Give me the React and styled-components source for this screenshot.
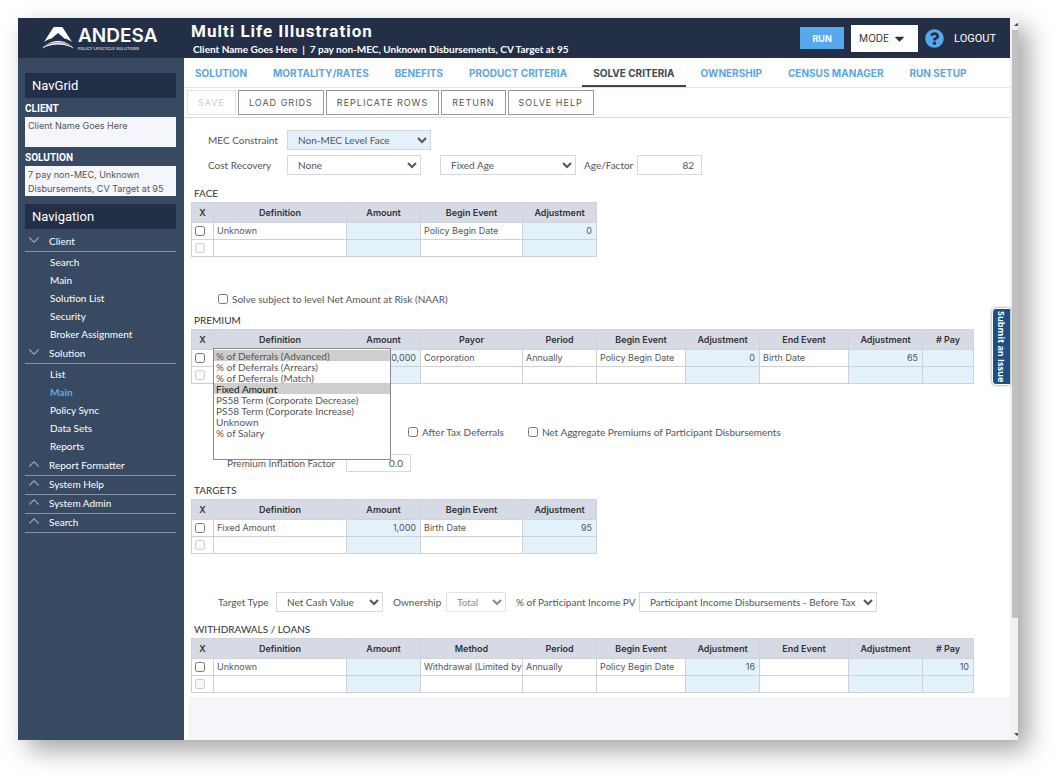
import { useState } from "react";
import styled, { createGlobalStyle } from "styled-components";
import { FaQuestionCircle, FaCaretDown } from "react-icons/fa";
import { ChevronDown, ChevronUp } from "lucide-react";

const GlobalStyle = createGlobalStyle`
  * {
    box-sizing: border-box;
  }
  body {
    margin: 0;
    background: #fff;
    font-family: Inter, "Liberation Sans", sans-serif;
    font-size: 9px;
    color: #555;
  }
  button, input, select, textarea {
    font: inherit;
    color: inherit;
    border-radius: 0;
    margin: 0;
  }
  a {
    color: inherit;
    text-decoration: none;
  }
`;

const Page = styled.div`
  min-height: 100vh;
  padding: 18px 42px 42px 18px;
  display: flex;
`;

const Frame = styled.div`
  flex: 1;
  min-width: 0;
  display: flex;
  position: relative;
  background: #fff;
  box-shadow: 10px 10px 24px rgba(0, 0, 0, 0.36);
`;

const Shell = styled.div`
  flex: 1;
  min-width: 0;
  display: flex;
  flex-direction: column;
`;

/* header */
const Header = styled.header`
  height: 40px;
  display: flex;
  align-items: center;
  background: #232f47;
  color: #fff;
`;

const Brand = styled.div`
  width: 173px;
  padding-left: 24px;
  display: flex;
  align-items: center;
  gap: 4px;
`;

const BrandText = styled.div`
  display: flex;
  flex-direction: column;
`;

const BrandName = styled.span`
  font-size: 19px;
  line-height: 20px;
  font-weight: 600;
`;

const BrandTag = styled.span`
  font-size: 4px;
  line-height: 5px;
  white-space: nowrap;
`;

const Heading = styled.div`
  flex: 1;
`;

const Title = styled.h1`
  margin: 0;
  font-family: Roboto, sans-serif;
  font-size: 17px;
  line-height: 22px;
  font-weight: 700;
  letter-spacing: 1px;
`;

const Subtitle = styled.p`
  margin: 0;
  padding-left: 2px;
  font-family: Lato, sans-serif;
  font-size: 10px;
  line-height: 14px;
  font-weight: 700;
  white-space: pre;
`;

const HeaderActions = styled.div`
  display: flex;
  align-items: center;
  gap: 7px;
  padding-right: 14px;
`;

const RunButton = styled.button`
  width: 44px;
  height: 22px;
  border: 0;
  background: #56aaec;
  color: #fff;
  font-weight: 700;
`;

const ModeButton = styled.button`
  width: 67px;
  height: 27px;
  padding: 0 11px 0 8px;
  display: flex;
  align-items: center;
  justify-content: space-between;
  border: 0;
  background: #fff;
  color: #333;
  font-size: 10px;
`;

const HelpButton = styled.button`
  display: flex;
  padding: 0;
  border: 0;
  border-radius: 50%;
  background: #232f47;
  color: #56aaec;
`;

const Logout = styled.a`
  padding-left: 3px;
  font-family: Roboto, sans-serif;
  font-size: 11px;
`;

/* sidebar */
const Body = styled.div`
  flex: 1;
  display: flex;
`;

const Sidebar = styled.aside`
  width: 166px;
  flex-shrink: 0;
  padding: 15px 8px 0 7px;
  display: flex;
  flex-direction: column;
  background: #384a61;
  color: #fff;
`;

const BarTitle = styled.h2`
  margin: 0;
  height: 25px;
  padding-left: 7px;
  background: #232f47;
  font-family: Roboto, sans-serif;
  font-size: 13px;
  line-height: 25px;
  font-weight: 400;
`;

const SideLabel = styled.label`
  padding: 4px 0 1px;
  font-family: Roboto, sans-serif;
  font-size: 10px;
  line-height: 14px;
  font-weight: 700;
`;

const SideText = styled.textarea`
  height: 30px;
  padding: 2px 3px;
  border: 0;
  resize: none;
  overflow: hidden;
  background: #f4f6fb;
  color: #555;
  line-height: 14px;
`;

const Nav = styled.nav`
  display: flex;
  flex-direction: column;
  padding-top: 4px;
  font-family: Lato, sans-serif;
  font-size: 10px;
`;

const NavBlock = styled.div`
  margin-top: 8px;
`;

const NavGroup = styled.button`
  height: 19px;
  padding: 0 0 2px;
  display: flex;
  align-items: center;
  gap: 6px;
  border: 0;
  border-bottom: 1px solid #8594a8;
  background: none;
  text-align: left;

  svg {
    margin-bottom: 2px;
    color: #8fa3bc;
  }
`;

const NavList = styled.ul`
  margin: 0;
  padding: 1px 0 2px 25px;
  list-style: none;
`;

const NavItem = styled.li`
  line-height: 18px;
  color: ${(props) => (props.$active ? "#56aaec" : "#fff")};
  font-weight: ${(props) => (props.$active ? 700 : 400)};
`;

/* main area */
const Main = styled.main`
  flex: 1;
  min-width: 0;
  display: flex;
  flex-direction: column;
`;

const Tabs = styled.nav`
  height: 30px;
  display: flex;
  gap: 4px;
  border-bottom: 1px solid #e1e3e8;
`;

const Tab = styled.a`
  padding: 0 11px;
  font-size: 10px;
  line-height: 31px;
  font-weight: 700;
  white-space: nowrap;
  color: ${(props) => (props.$active ? "#384a54" : "#5ba6dd")};
  box-shadow: ${(props) => (props.$active ? "inset 0 -2px #384a54" : "none")};
`;

const Toolbar = styled.div`
  height: 30px;
  padding: 2px 3px;
  display: flex;
  gap: 2px;
  border-bottom: 1px solid #d9d9d9;
`;

const ToolButton = styled.button`
  height: 25px;
  padding: 0 10px;
  border: 1px solid #999;
  background: #fff;
  color: #555;
  letter-spacing: 1px;
  white-space: nowrap;

  &:disabled {
    border-color: #e4e4e4;
    color: #ccc;
  }
`;

const Content = styled.div`
  padding: 12px 8px 4px 7px;
  background: #fff;
`;

const Filler = styled.div`
  flex: 1;
  margin-left: 4px;
  background: #f4f6fa;
`;

const FormRow = styled.div`
  height: 20px;
  margin: ${(props) => props.$margin || "0"};
  padding-left: ${(props) => props.$indent}px;
  display: flex;
  align-items: center;
  font-family: Lato, sans-serif;
  font-size: 10px;
  white-space: nowrap;
`;

const FieldLabel = styled.label`
  width: ${(props) => (props.$width ? `${props.$width}px` : "auto")};
  margin-right: 3px;
`;

const Select = styled.select`
  width: ${(props) => props.$width}px;
  height: 20px;
  margin-right: ${(props) => props.$gap || 0}px;
  padding: 0 0 0 6px;
  border: 1px solid #d5d8dc;
  background-color: ${(props) => (props.$blue ? "#e3f1fb" : "#fff")};

  &:disabled {
    opacity: 0.7;
  }
`;

const NumberInput = styled.input`
  width: 65px;
  height: ${(props) => props.$height || 20}px;
  padding: 0 7px;
  border: 1px solid #d5d8dc;
  text-align: right;
`;

const CheckLabel = styled.label`
  display: flex;
  align-items: center;
  gap: 4px;
  margin-right: 24px;
`;

const Checkbox = styled.input.attrs({ type: "checkbox" })`
  width: 10px;
  height: 10px;
`;

const SectionTitle = styled.h3`
  margin: 0;
  padding-left: 3px;
  font-family: Lato, sans-serif;
  font-size: 10px;
  line-height: 18px;
  font-weight: 400;
  color: #333;
`;

const Table = styled.table`
  width: ${(props) => props.$width}px;
  table-layout: fixed;
  border-collapse: collapse;
`;

const Th = styled.th`
  height: 20px;
  padding: 0;
  border: 1px solid #cfd3dc;
  background: #d6dae4;
  color: #333;
  font-weight: 600;
`;

const Td = styled.td`
  height: 17px;
  padding: ${(props) => (props.$right ? "0 4px 0 0" : "0 0 0 3px")};
  border: 1px solid #cdd1d6;
  background: ${(props) => (props.$blue ? "#e3f1fb" : "#fff")};
  text-align: ${(props) => (props.$right ? "right" : "left")};
  line-height: 14px;
  white-space: nowrap;
`;

const Clip = styled.div`
  overflow: hidden;
`;

const CheckCell = styled(Td)`
  line-height: 0;
`;

const PopupAnchor = styled.div`
  position: relative;
`;

const DefinitionList = styled.select`
  position: absolute;
  left: 22px;
  top: 19px;
  z-index: 1;
  width: 178px;
  height: 112px;
  padding: 1px 0;
  border: 1px solid #888;
  background: #fff;
  font-family: Lato, sans-serif;
  font-size: 10px;
  overflow: hidden;
  outline: 0;

  option {
    height: 11px;
    min-height: 11px;
    padding: 0 2px;
    line-height: 11px;
  }
  option:first-child {
    background: #cecece;
  }
`;

const IssueButton = styled.button`
  position: absolute;
  right: 8px;
  top: 290px;
  width: 18px;
  height: 77px;
  padding: 0;
  border: 1px solid #fff;
  border-right: 0;
  border-radius: 4px 0 0 4px;
  background: #1f4e80;
  box-shadow: 0 0 3px rgba(0, 0, 0, 0.5);
  color: #fff;
  font-family: "Open Sans", sans-serif;
  font-weight: 700;
  writing-mode: vertical-rl;
  white-space: nowrap;
`;

/* scrollbar */
const ScrollTrack = styled.div`
  width: 8px;
  padding-left: 2px;
  display: flex;
  flex-direction: column;
  background: #f1f1f1;
  color: #505050;
`;

const ScrollArrow = styled.div`
  height: 12px;
  display: flex;
  align-items: center;
  justify-content: flex-end;
`;

const ScrollThumb = styled.div`
  flex: 59;
  background: #c1c1c1;
`;

const ScrollRest = styled.div`
  flex: 11;
`;

const tabs = [
  "SOLUTION",
  "MORTALITY/RATES",
  "BENEFITS",
  "PRODUCT CRITERIA",
  "SOLVE CRITERIA",
  "OWNERSHIP",
  "CENSUS MANAGER",
  "RUN SETUP",
];

const navGroups = [
  {
    name: "Client",
    items: ["Search", "Main", "Solution List", "Security", "Broker Assignment"],
  },
  {
    name: "Solution",
    items: ["List", "Main", "Policy Sync", "Data Sets", "Reports"],
    active: "Main",
  },
  { name: "Report Formatter" },
  { name: "System Help" },
  { name: "System Admin" },
  { name: "Search" },
];

const definitions = [
  "% of Deferrals (Advanced)",
  "% of Deferrals (Arrears)",
  "% of Deferrals (Match)",
  "Fixed Amount",
  "PS58 Term (Corporate Decrease)",
  "PS58 Term (Corporate Increase)",
  "Unknown",
  "% of Salary",
];

const shortColumns = [
  { name: "Definition", width: 133 },
  { name: "Amount", width: 74, blue: true },
  { name: "Begin Event", width: 102 },
  { name: "Adjustment", width: 74, blue: true },
];

const longColumns = (third) => [
  { name: "Definition", width: 133 },
  { name: "Amount", width: 74, blue: true },
  { name: third, width: 102 },
  { name: "Period", width: 74 },
  { name: "Begin Event", width: 89 },
  { name: "Adjustment", width: 74, blue: true },
  { name: "End Event", width: 89 },
  { name: "Adjustment", width: 74, blue: true },
  { name: "# Pay", width: 51, blue: true },
];

const Grid = ({ columns, row, label }) => {
  const total = columns.reduce((sum, col) => sum + col.width, 23);

  return (
    <Table $width={total} aria-label={label}>
      <colgroup>
        <col style={{ width: 22 }} />
        {columns.map((col, i) => (
          <col key={i} style={{ width: col.width }} />
        ))}
      </colgroup>
      <thead>
        <tr>
          <Th>X</Th>
          {columns.map((col, i) => (
            <Th key={i}>{col.name}</Th>
          ))}
        </tr>
      </thead>
      <tbody>
        {[row, []].map((cells, r) => (
          <tr key={r}>
            <CheckCell>
              <Checkbox disabled={r === 1} aria-label={`Select row ${r + 1}`} />
            </CheckCell>
            {columns.map((col, i) => (
              <Td key={i} $blue={col.blue} $right={col.blue}>
                <Clip>{cells[i]}</Clip>
              </Td>
            ))}
          </tr>
        ))}
      </tbody>
    </Table>
  );
};

const Logo = () => (
  <svg width="32" height="22" viewBox="0 0 32 22" fill="#fff" aria-hidden="true">
    <path d="M13 0h6c1 0 1.600.400 2 1l9 14c-2.500-1.800-5-2.800-7.500-3.400L16 6l-6.500 5.600C7 12.200 4.500 13.200 2 15L11 1c.400-.600 1-1 2-1z" />
    <path d="M0 21.500c9-10 23-10 32 0-10-5.500-22-5.500-32 0z" />
    <path
      d="M3 19c7.500-4.500 18.500-4.500 26 0"
      fill="none"
      stroke="#232f47"
      strokeWidth="0.600"
    />
  </svg>
);

export default function App() {
  const [definition, setDefinition] = useState("Fixed Amount");

  return (
    <Page>
      <GlobalStyle />
      <Frame>
        <Shell>
          <Header>
            <Brand>
              <Logo />
              <BrandText>
                <BrandName>ANDESA</BrandName>
                <BrandTag>POLICY LIFECYCLE SOLUTIONS</BrandTag>
              </BrandText>
            </Brand>
            <Heading>
              <Title>Multi Life Illustration</Title>
              <Subtitle>
                {"Client Name Goes Here  |  7 pay non-MEC, Unknown Disbursements, CV Target at 95"}
              </Subtitle>
            </Heading>
            <HeaderActions>
              <RunButton>RUN</RunButton>
              <ModeButton>
                MODE <FaCaretDown size={15} />
              </ModeButton>
              <HelpButton aria-label="Help">
                <FaQuestionCircle size={19} />
              </HelpButton>
              <Logout href="#logout">LOGOUT</Logout>
            </HeaderActions>
          </Header>

          <Body>
            <Sidebar>
              <BarTitle>NavGrid</BarTitle>
              <SideLabel htmlFor="client">CLIENT</SideLabel>
              <SideText id="client" readOnly value="Client Name Goes Here" />
              <SideLabel htmlFor="solution">SOLUTION</SideLabel>
              <SideText
                id="solution"
                readOnly
                value="7 pay non-MEC, Unknown Disbursements, CV Target at 95"
              />
              <NavBlock>
                <BarTitle>Navigation</BarTitle>
                <Nav>
                  {navGroups.map((group) => [
                    <NavGroup key={group.name}>
                      {group.items ? (
                        <ChevronDown size={18} strokeWidth={1.5} />
                      ) : (
                        <ChevronUp size={18} strokeWidth={1.5} />
                      )}
                      {group.name}
                    </NavGroup>,
                    group.items && (
                      <NavList key={`${group.name}-items`}>
                        {group.items.map((item) => (
                          <NavItem key={item} $active={item === group.active}>
                            <a href="#nav">{item}</a>
                          </NavItem>
                        ))}
                      </NavList>
                    ),
                  ])}
                </Nav>
              </NavBlock>
            </Sidebar>

            <Main>
              <Tabs>
                {tabs.map((tab) => (
                  <Tab key={tab} href="#tab" $active={tab === "SOLVE CRITERIA"}>
                    {tab}
                  </Tab>
                ))}
              </Tabs>
              <Toolbar>
                <ToolButton disabled>SAVE</ToolButton>
                <ToolButton>LOAD GRIDS</ToolButton>
                <ToolButton>REPLICATE ROWS</ToolButton>
                <ToolButton>RETURN</ToolButton>
                <ToolButton>SOLVE HELP</ToolButton>
              </Toolbar>

              <Content>
                <FormRow $indent={17} $margin="0 0 5px">
                  <FieldLabel htmlFor="mec" $width={76}>
                    MEC Constraint
                  </FieldLabel>
                  <Select id="mec" $width={144} $blue>
                    <option>Non-MEC Level Face</option>
                  </Select>
                </FormRow>
                <FormRow $indent={17} $margin="0 0 9px">
                  <FieldLabel htmlFor="recovery" $width={76}>
                    Cost Recovery
                  </FieldLabel>
                  <Select id="recovery" $width={134} $gap={19}>
                    <option>None</option>
                  </Select>
                  <Select aria-label="Recovery age" $width={136} $gap={8}>
                    <option>Fixed Age</option>
                  </Select>
                  <FieldLabel htmlFor="factor" $width={50}>
                    Age/Factor
                  </FieldLabel>
                  <NumberInput id="factor" defaultValue="82" />
                </FormRow>

                <SectionTitle>FACE</SectionTitle>
                <Grid
                  label="Face"
                  columns={shortColumns}
                  row={["Unknown", "", "Policy Begin Date", "0"]}
                />

                <FormRow $indent={27} $margin="32px 0 2px">
                  <CheckLabel>
                    <Checkbox />
                    Solve subject to level Net Amount at Risk (NAAR)
                  </CheckLabel>
                </FormRow>

                <SectionTitle>PREMIUM</SectionTitle>
                <PopupAnchor>
                  <Grid
                    label="Premium"
                    columns={longColumns("Payor")}
                    row={[
                      "",
                      "10,000",
                      "Corporation",
                      "Annually",
                      "Policy Begin Date",
                      "0",
                      "Birth Date",
                      "65",
                    ]}
                  />
                  <DefinitionList
                    size={10}
                    aria-label="Definition"
                    value={definition}
                    onChange={(e) => setDefinition(e.target.value)}
                  >
                    {definitions.map((name) => (
                      <option key={name}>{name}</option>
                    ))}
                  </DefinitionList>
                </PopupAnchor>

                <FormRow $indent={217} $margin="38px 0 11px">
                  <CheckLabel>
                    <Checkbox />
                    After Tax Deferrals
                  </CheckLabel>
                  <CheckLabel>
                    <Checkbox />
                    Net Aggregate Premiums of Participant Disbursements
                  </CheckLabel>
                </FormRow>
                <FormRow $indent={36} $margin="0 0 8px">
                  <FieldLabel htmlFor="inflation" $width={116}>
                    Premium Inflation Factor
                  </FieldLabel>
                  <NumberInput id="inflation" $height={18} defaultValue="0.0" />
                </FormRow>

                <SectionTitle>TARGETS</SectionTitle>
                <Grid
                  label="Targets"
                  columns={shortColumns}
                  row={["Fixed Amount", "1,000", "Birth Date", "95"]}
                />

                <FormRow $indent={27} $margin="38px 0 8px">
                  <FieldLabel htmlFor="target" $width={55}>
                    Target Type
                  </FieldLabel>
                  <Select id="target" $width={107} $gap={10}>
                    <option>Net Cash Value</option>
                  </Select>
                  <FieldLabel htmlFor="ownership" $width={50}>
                    Ownership
                  </FieldLabel>
                  <Select id="ownership" $width={60} $gap={10} disabled>
                    <option>Total</option>
                  </Select>
                  <FieldLabel htmlFor="income" $width={120}>
                    % of Participant Income PV
                  </FieldLabel>
                  <Select id="income" $width={238}>
                    <option>Participant Income Disbursements - Before Tax</option>
                  </Select>
                </FormRow>

                <SectionTitle>WITHDRAWALS / LOANS</SectionTitle>
                <Grid
                  label="Withdrawals and loans"
                  columns={longColumns("Method")}
                  row={[
                    "Unknown",
                    "",
                    "Withdrawal (Limited by I",
                    "Annually",
                    "Policy Begin Date",
                    "16",
                    "",
                    "",
                    "10",
                  ]}
                />
              </Content>
              <Filler />
            </Main>
          </Body>
        </Shell>

        <ScrollTrack aria-hidden="true">
          <ScrollArrow>
            <svg width="4" height="3" viewBox="0 0 4 3" fill="currentColor">
              <path d="M0 3L3 0L4 1V3z" />
            </svg>
          </ScrollArrow>
          <ScrollThumb />
          <ScrollRest />
          <ScrollArrow>
            <svg width="4" height="3" viewBox="0 0 4 3" fill="currentColor">
              <path d="M0 0L3 3L4 2V0z" />
            </svg>
          </ScrollArrow>
        </ScrollTrack>
        <IssueButton>Submit an Issue</IssueButton>
      </Frame>
    </Page>
  );
}
